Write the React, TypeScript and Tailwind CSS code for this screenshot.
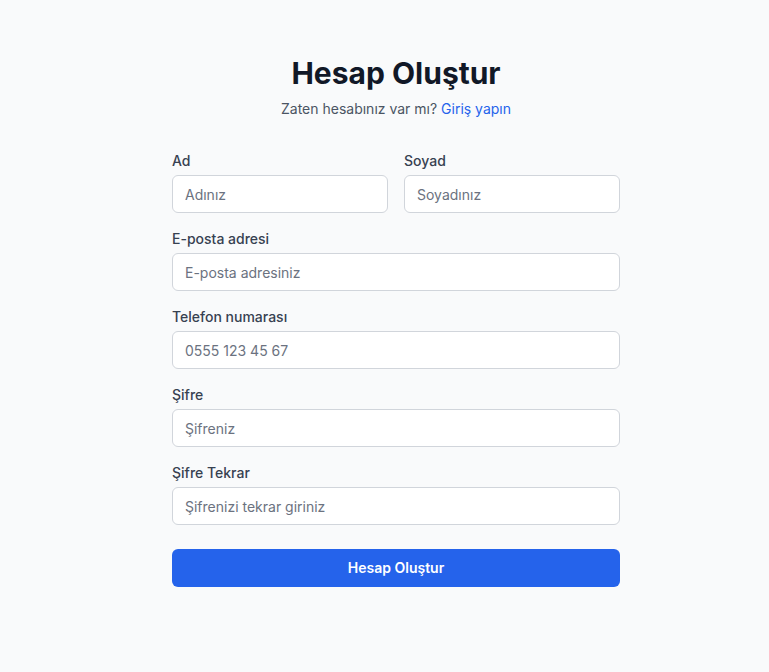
import React from "react";

const fields = [
  { label: "E-posta adresi", placeholder: "E-posta adresiniz", type: "email" },
  { label: "Telefon numarası", placeholder: "0555 123 45 67", type: "tel" },
  { label: "Şifre", placeholder: "Şifreniz", type: "password" },
  { label: "Şifre Tekrar", placeholder: "Şifrenizi tekrar giriniz", type: "password" },
];

const inputCls =
  "mt-1 block w-full h-[38px] rounded-md border border-[#d1d5db] bg-white px-3 text-sm text-[#111827] placeholder:text-[#6b7280] outline-none";

const Field = ({ label, placeholder, type = "text" }: { label: string; placeholder: string; type?: string }) => (
  <div>
    <label className="block text-sm font-medium text-[#374151]">{label}</label>
    <input type={type} placeholder={placeholder} className={inputCls} />
  </div>
);

export default function App() {
  return (
    <div className="flex min-h-screen justify-center bg-[#f9fafb] pl-[23px] pt-[55px] font-['Inter',sans-serif]">
      <div className="w-full max-w-md">
        <h1 className="text-center text-3xl font-bold text-[#111827]">Hesap Oluştur</h1>
        <p className="mt-2 text-center text-sm text-[#4b5563]">
          Zaten hesabınız var mı?{" "}
          <a href="#" className="text-[#2563eb]">
            Giriş yapın
          </a>
        </p>

        <form className="mt-8" onSubmit={(e) => e.preventDefault()}>
          <div className="space-y-4">
            <div className="grid grid-cols-2 gap-4">
              <Field label="Ad" placeholder="Adınız" />
              <Field label="Soyad" placeholder="Soyadınız" />
            </div>
            {fields.map((f) => (
              <Field key={f.label} {...f} />
            ))}
          </div>

          <button
            type="submit"
            className="mt-6 flex h-[38px] w-full items-center justify-center rounded-md bg-[#2563eb] text-sm font-semibold text-white"
          >
            Hesap Oluştur
          </button>
        </form>
      </div>
    </div>
  );
}
